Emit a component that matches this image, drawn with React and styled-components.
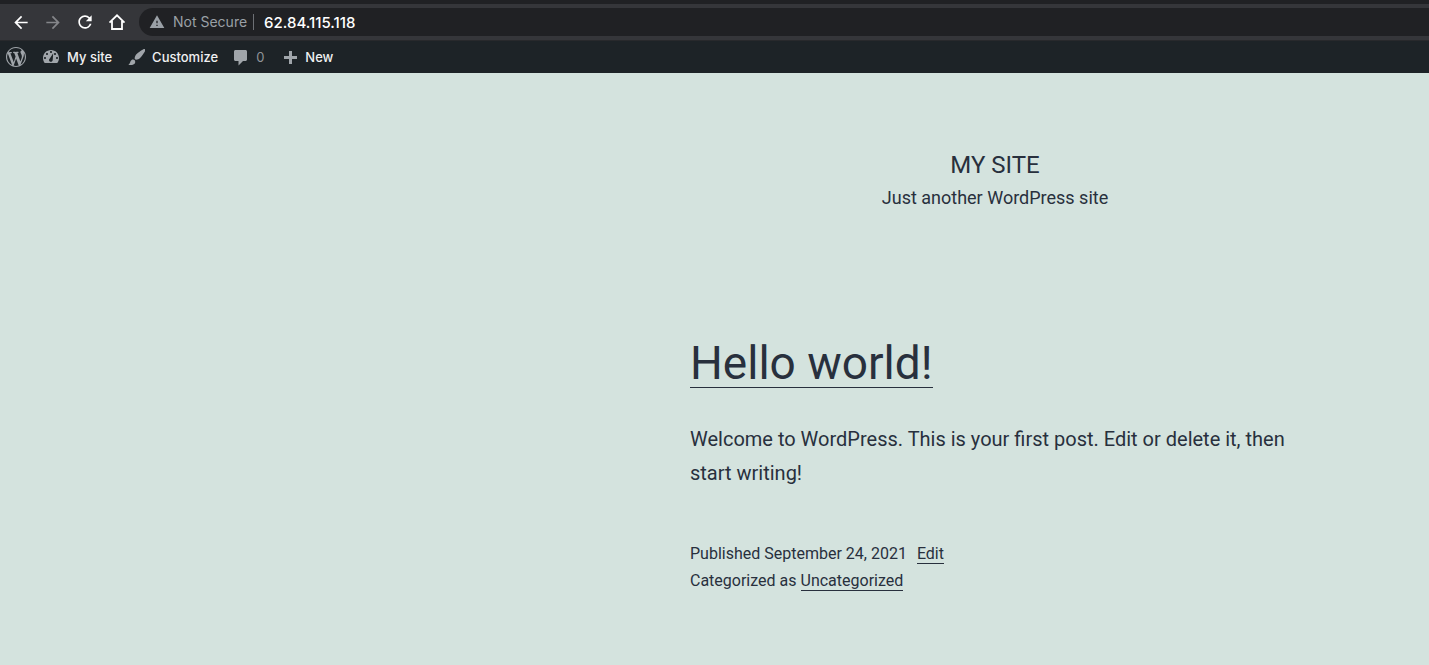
import React from "react";
import styled, { createGlobalStyle } from "styled-components";
import { MdArrowBack, MdArrowForward, MdRefresh, MdWarning } from "react-icons/md";

const GlobalStyle = createGlobalStyle`
  *, *::before, *::after { box-sizing: border-box; }
  body {
    margin: 0;
    background: #d4e3de;
    color: #28303d;
    font-family: Inter, "Liberation Sans", sans-serif;
  }
`;

const Page = styled.div`
  display: flex;
  flex-direction: column;
  min-height: 100vh;
`;

const BrowserBar = styled.div`
  display: flex;
  align-items: center;
  height: 41px;
  padding-left: 11px;
  background: #35363a;
  border-top: 4px solid #202124;
  border-bottom: 1px solid #28292c;
`;

const NavButtons = styled.div`
  display: flex;
  gap: 12px;
  margin-right: 12px;
`;

const NavButton = styled.button`
  display: flex;
  align-items: center;
  justify-content: center;
  width: 20px;
  height: 28px;
  padding: 0;
  border: 0;
  background: none;
  color: ${(p) => (p.$dim ? "#85868a" : "#ffffff")};
`;

const AddressBar = styled.div`
  display: flex;
  flex: 1;
  align-items: center;
  height: 28px;
  padding-left: 10px;
  background: #202124;
  border-radius: 14px 0 0 14px;
  color: #9aa0a6;
  font-size: 14px;
`;

const Security = styled.span`
  margin: 0 6px 0 8px;
  line-height: 18px;
  white-space: nowrap;
`;

const Divider = styled.span`
  width: 1px;
  height: 16px;
  margin-right: 10px;
  background: #6d7075;
`;

const AddressInput = styled.input`
  flex: 1;
  min-width: 0;
  padding: 0;
  border: 0;
  outline: 0;
  background: none;
  color: #ffffff;
  font: 500 15px Inter, "Liberation Sans", sans-serif;
`;

const AdminBar = styled.nav`
  display: flex;
  align-items: center;
  gap: 16px;
  height: 32px;
  padding-left: 6px;
  background: #1d2327;
`;

const AdminLink = styled.a`
  display: flex;
  align-items: center;
  gap: 7px;
  color: ${(p) => (p.$dim ? "#8f9497" : "#f0f0f1")};
  font-size: 13px;
  font-weight: ${(p) => (p.$dim ? 400 : 500)};
  text-decoration: none;

  svg { color: #a0a5aa; }
`;

const Site = styled.div`
  display: grid;
  flex: 1;
  grid-template-columns: minmax(0, 690fr) minmax(0, 610px) minmax(0, 129fr);
  align-content: start;
  padding: 72px 0 60px;
  font-family: Roboto, "Liberation Sans", sans-serif;

  > * { grid-column: 2; }
`;

const SiteHeader = styled.header`
  margin-bottom: 128px;
  text-align: center;
`;

const SiteTitle = styled.h1`
  margin: 0;
  font-size: 24px;
  font-weight: 400;
  line-height: 40px;
`;

const Tagline = styled.p`
  margin: 0;
  font-size: 18px;
  line-height: 26px;
`;

const PostTitle = styled.h2`
  display: flex;
  margin: 0 0 34px;
  font-size: 46px;
  font-weight: 400;
  line-height: 48px;
`;

const PostLink = styled.a`
  color: inherit;
  text-decoration: none;
  border-bottom: 1px solid currentColor;
`;

const Excerpt = styled.p`
  margin: 0 0 50px;
  font-size: 20px;
  line-height: 34px;
`;

const Meta = styled.footer`
  font-size: 16px;
  line-height: 27px;
`;

const MetaLine = styled.div`
  display: flex;
  align-items: baseline;
  gap: ${(p) => p.$gap}px;
`;

const MetaLink = styled(PostLink)`
  line-height: 18px;
`;

const dashicons = {
  wordpress:
    "M20 10c0-5.51-4.49-10-10-10C4.48 0 0 4.49 0 10c0 5.52 4.48 10 10 10 5.51 0 10-4.48 10-10zM7.78 15.37L4.37 6.22c.55-.02 1.17-.08 1.17-.08.5-.06.44-1.13-.06-1.11 0 0-1.45.11-2.37.11-.18 0-.37 0-.58-.01C4.12 2.69 6.87 1.11 10 1.11c2.33 0 4.45.87 6.05 2.34-.68-.11-1.65.39-1.65 1.58 0 .74.45 1.36.9 2.1.35.61.55 1.36.55 2.46 0 1.49-1.4 5-1.4 5l-3.03-8.37c.54-.02.82-.17.82-.17.5-.05.44-1.25-.06-1.22 0 0-1.44.12-2.38.12-.87 0-2.33-.12-2.33-.12-.5-.03-.56 1.2-.06 1.22l.92.08 1.26 3.41zM17.41 10c.24-.64.74-1.87.43-4.25.7 1.29 1.05 2.71 1.05 4.25 0 3.29-1.73 6.24-4.4 7.78.97-2.59 1.94-5.2 2.92-7.78zM6.1 18.09C3.12 16.65 1.11 13.53 1.11 10c0-1.3.23-2.48.72-3.59C3.25 10.3 4.67 14.2 6.1 18.09zm4.03-6.63l2.58 6.98c-.86.29-1.76.45-2.71.45-.79 0-1.57-.11-2.29-.33.81-2.38 1.62-4.74 2.42-7.1z",
  dashboard:
    "M3.76 16h12.48c1.1-1.37 1.76-3.11 1.76-5 0-4.42-3.58-8-8-8s-8 3.58-8 8c0 1.89.66 3.63 1.76 5zM10 4c.55 0 1 .45 1 1s-.45 1-1 1-1-.45-1-1 .45-1 1-1zM6 6c.55 0 1 .45 1 1s-.45 1-1 1-1-.45-1-1 .45-1 1-1zm8 0c.55 0 1 .45 1 1s-.45 1-1 1-1-.45-1-1 .45-1 1-1zm-5.2 5.4 3.4-5.1-.5 6.6c-.1 1.1-.8 1.8-1.8 1.8-1.1 0-1.9-.8-1.9-1.8 0-.6.3-1.1.8-1.5zM4 10c.55 0 1 .45 1 1s-.45 1-1 1-1-.45-1-1 .45-1 1-1zm12 0c.55 0 1 .45 1 1s-.45 1-1 1-1-.45-1-1 .45-1 1-1z",
  brush:
    "M18.33 3.57s.27-.8-.31-1.36c-.53-.52-1.22-.24-1.22-.24-.61.3-5.76 3.47-7.67 5.57-.86.96-2.06 3.79-1.09 4.82.92.98 3.96-.17 4.79-1 2.06-2.06 5.21-7.17 5.5-7.79zM1.4 17.65c2.37-1.56 1.46-3.41 3.23-4.64.93-.65 2.22-.62 3.08.29.63.67.8 2.57-.16 3.46-1.57 1.45-4 1.55-6.15.89z",
  comment:
    "M4.5 2h10c.8 0 1.5.7 1.5 1.5v8c0 .8-.7 1.5-1.5 1.5H12l-4.5 4.5V13h-3C3.7 13 3 12.3 3 11.5v-8C3 2.7 3.7 2 4.5 2z",
  plus: "M17 7v3h-5v5H9v-5H4V7h5V2h3v5h5z",
};

function Dashicon({ name, viewBox = "0 0 20 20", width = 20, height = 20 }) {
  return (
    <svg width={width} height={height} viewBox={viewBox} fill="currentColor" fillRule="evenodd" aria-hidden="true">
      <path d={dashicons[name]} />
    </svg>
  );
}

function HomeIcon() {
  return (
    <svg width="20" height="20" viewBox="0 0 20 20" fill="none" stroke="currentColor" strokeWidth="1.8" aria-hidden="true">
      <path d="M2.5 10.7 10 3.3l7.500 7.400M5 9v8h10V9" />
    </svg>
  );
}

export default function App() {
  return (
    <Page>
      <GlobalStyle />
      <BrowserBar>
        <NavButtons>
          <NavButton aria-label="Back"><MdArrowBack size={21} /></NavButton>
          <NavButton aria-label="Forward" $dim><MdArrowForward size={21} /></NavButton>
          <NavButton aria-label="Reload"><MdRefresh size={22} /></NavButton>
          <NavButton aria-label="Home"><HomeIcon /></NavButton>
        </NavButtons>
        <AddressBar>
          <MdWarning size={16} />
          <Security>Not Secure</Security>
          <Divider />
          <AddressInput aria-label="Address" defaultValue="62.84.115.118" />
        </AddressBar>
      </BrowserBar>
      <AdminBar aria-label="Toolbar">
        <AdminLink href="#about" aria-label="About WordPress"><Dashicon name="wordpress" /></AdminLink>
        <AdminLink href="#site">
          <Dashicon name="dashboard" viewBox="1 0 18 20" width={18} />
          My site
        </AdminLink>
        <AdminLink href="#customize">
          <Dashicon name="brush" viewBox="1 0 17 20" width={17} />
          Customize
        </AdminLink>
        <AdminLink href="#comments" $dim>
          <Dashicon name="comment" viewBox="3 -1 15 20" width={15} />
          0
        </AdminLink>
        <AdminLink href="#new">
          <Dashicon name="plus" viewBox="0 -2 18 20" width={18} />
          New
        </AdminLink>
      </AdminBar>
      <Site>
        <SiteHeader>
          <SiteTitle>MY SITE</SiteTitle>
          <Tagline>Just another WordPress site</Tagline>
        </SiteHeader>
        <main>
          <article>
            <PostTitle><PostLink href="#hello-world">Hello world!</PostLink></PostTitle>
            <Excerpt>Welcome to WordPress. This is your first post. Edit or delete it, then start writing!</Excerpt>
            <Meta>
              <MetaLine $gap={10}>
                <span>Published <time dateTime="2021-09-24">September 24, 2021</time></span>
                <MetaLink href="#edit">Edit</MetaLink>
              </MetaLine>
              <MetaLine $gap={4}>
                <span>Categorized as</span>
                <MetaLink href="#uncategorized">Uncategorized</MetaLink>
              </MetaLine>
            </Meta>
          </article>
        </main>
      </Site>
    </Page>
  );
}
